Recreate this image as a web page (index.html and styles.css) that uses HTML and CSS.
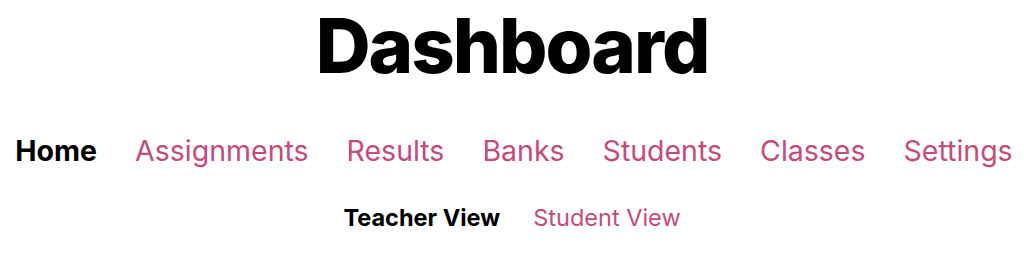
FILE: index.html
```html
<!DOCTYPE html>
<html>
  <head>
    <title>Dashboard</title>
    <link rel="stylesheet" href="styles.css">
  </head>
  <body>
    <h1>Dashboard</h1>

    <nav class="main-nav">
      <a class="active" href="#">Home</a>
      <a href="#">Assignments</a>
      <a href="#">Results</a>
      <a href="#">Banks</a>
      <a href="#">Students</a>
      <a href="#">Classes</a>
      <a href="#">Settings</a>
    </nav>

    <nav class="sub-nav">
      <a class="active" href="#">Teacher View</a>
      <a href="#">Student View</a>
    </nav>
  </body>
</html>
```

FILE: styles.css
```css
body {
  margin: 0;
  background-color: #fff;
  color: #000;
  font-family: Inter, "Noto Sans", sans-serif;
}

h1 {
  margin: 0;
  padding-top: 3px;
  text-align: center;
  font-size: 76px;
  font-weight: 800;
  letter-spacing: -2px;
  line-height: 84px;
}

a {
  color: #c64b7b;
  text-decoration: none;

  &:hover {
    text-decoration: underline;
  }

  &.active {
    color: #000;
    font-weight: 700;
  }
}

.main-nav {
  display: flex;
  justify-content: center;
  gap: 38px;
  margin-top: 44px;
  padding-left: 4px;
  font-size: 28.5px;
  line-height: 40px;
}

.sub-nav {
  display: flex;
  justify-content: center;
  gap: 33px;
  margin-top: 32px;
  font-size: 23.5px;
  line-height: 30px;
}
```
